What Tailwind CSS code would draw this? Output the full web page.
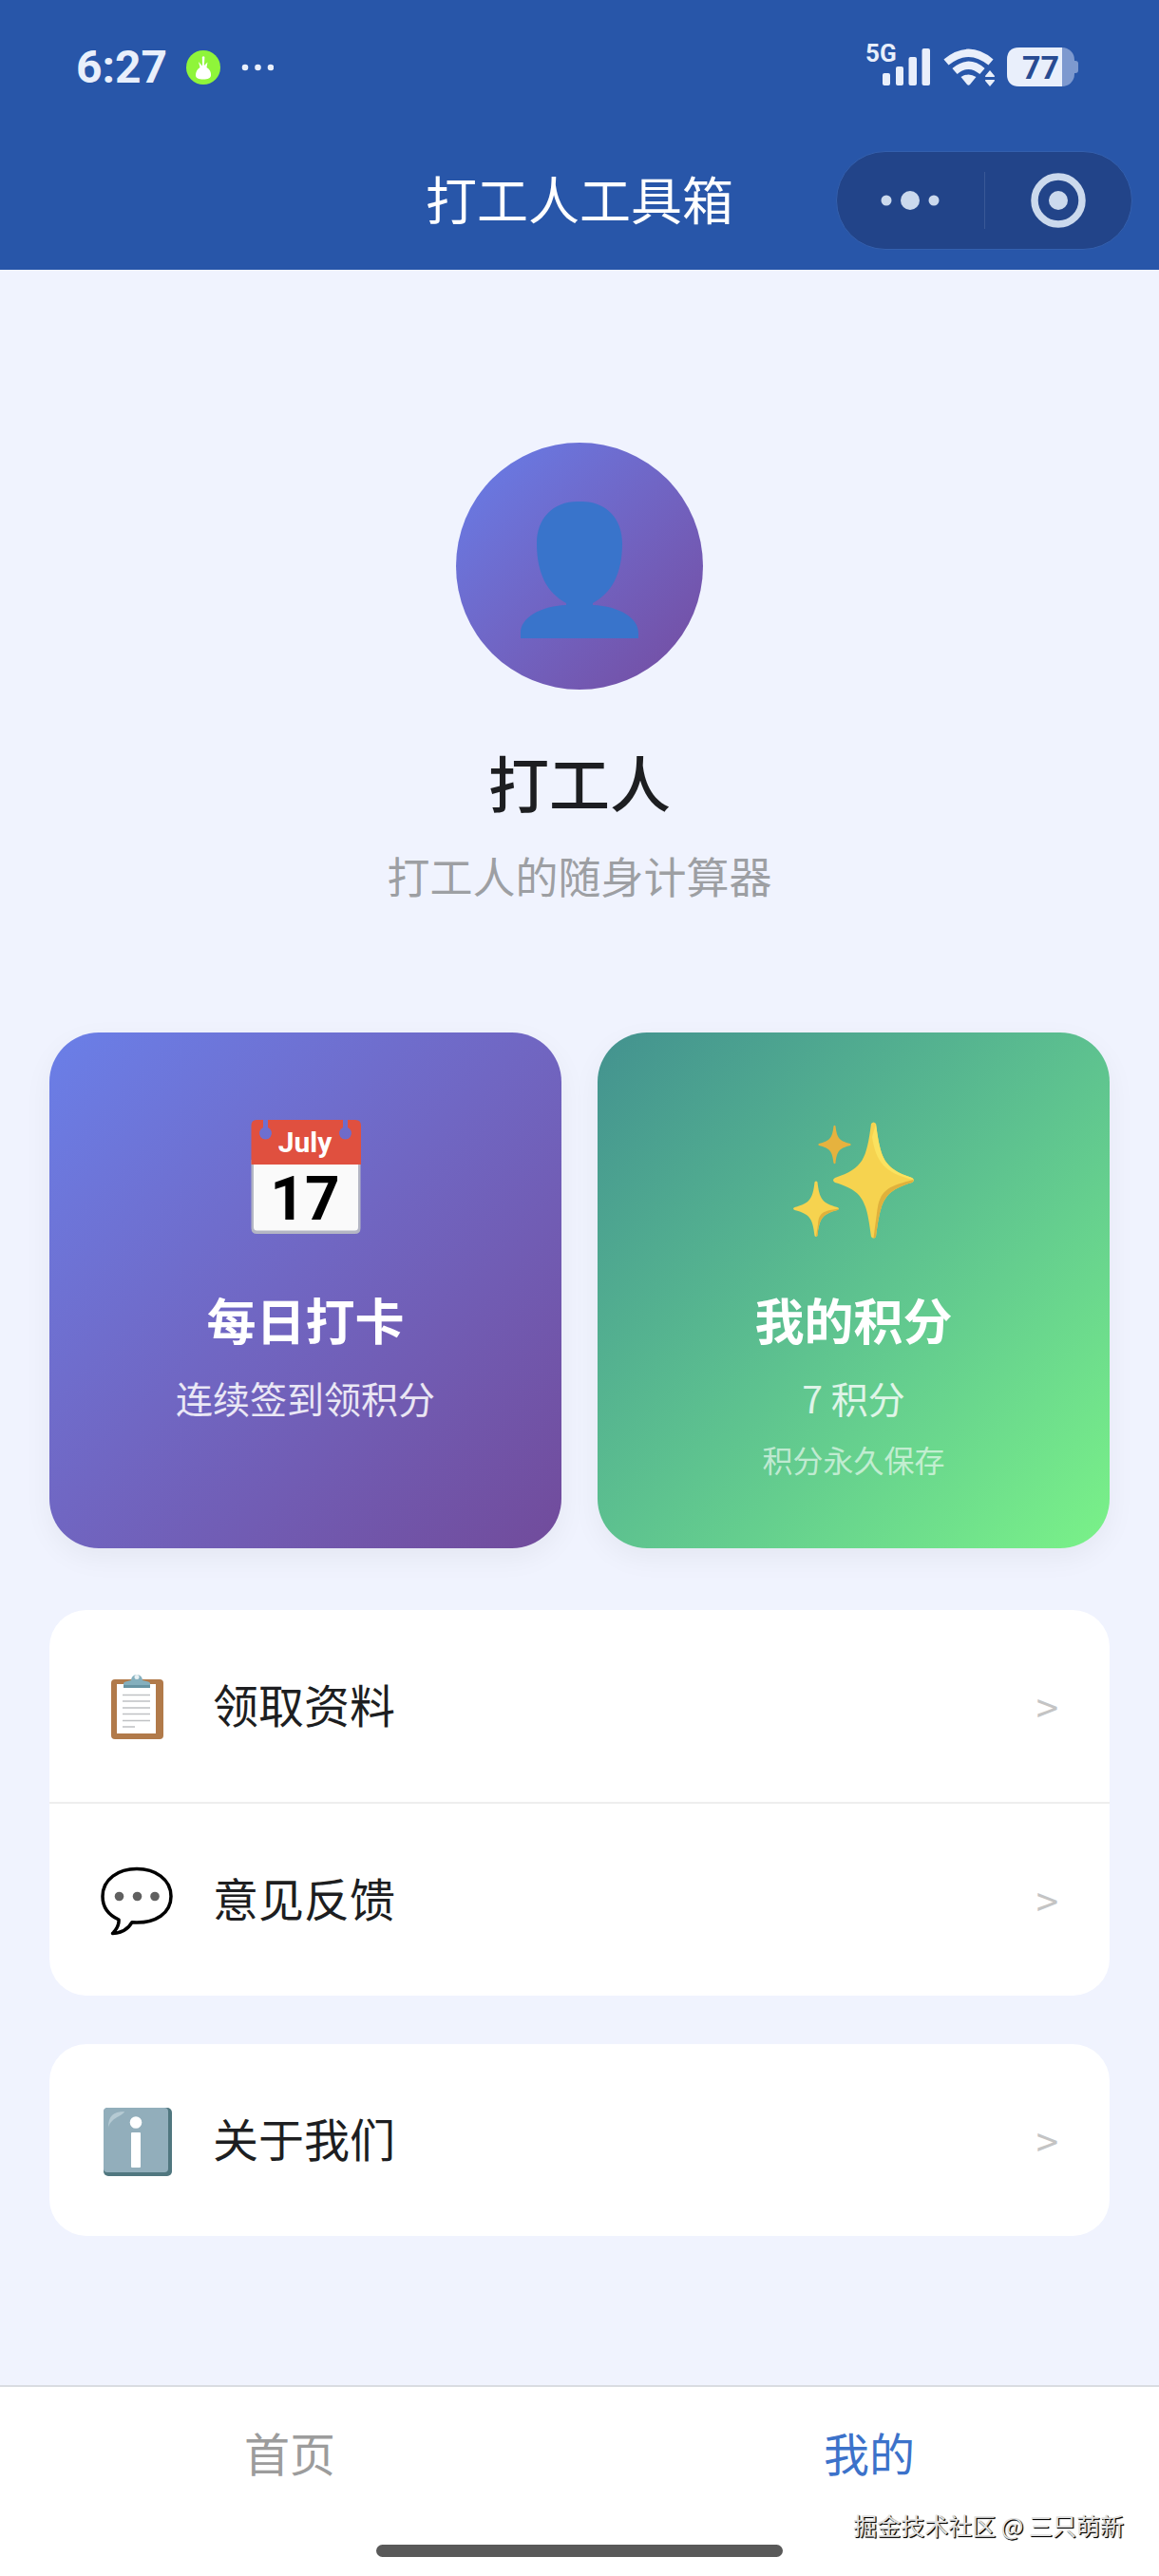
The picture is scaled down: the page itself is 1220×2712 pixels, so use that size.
<!DOCTYPE html>
<html lang="zh-CN">
<head>
<meta charset="utf-8">
<meta name="viewport" content="width=device-width, initial-scale=1">
<title>打工人工具箱</title>
<script src="https://cdn.jsdelivr.net/npm/@tailwindcss/browser@4"></script>
</head>
<body class="bg-[#f0f3fe] font-['Noto_Sans_CJK_SC',sans-serif] text-[#1d1e21]">
<div class="relative flex min-h-screen flex-col">

  <header class="bg-[#2856a9] text-white">
    <!-- status bar -->
    <div class="flex h-[142px] items-center justify-between pr-[84px] pl-20 text-[#e9effb]">
      <div class="flex items-center">
        <span class="font-['Roboto',sans-serif] text-[48px] leading-none font-bold">6:27</span>
        <svg class="ml-5 size-9" viewBox="0 0 36 36" aria-hidden="true">
          <circle cx="18" cy="18" r="18" fill="#8ff53a"/>
          <path d="M16.800 7c.8-.9 2-.9 2.600 0l-.5 9 3.600-3.500-1 5.500c3 1.500 5 5 4.500 8.500-.3 2.800-3 4-8 4s-7.800-1.300-8-4c-.2-3.500 1.700-6.800 4.500-8.500l-1.500-6 4 4.500z" fill="#fff"/>
        </svg>
        <svg class="ml-5 h-2 w-9" viewBox="0 0 36 8" fill="currentColor" aria-hidden="true">
          <circle cx="6" cy="4" r="3.300"/><circle cx="19.500" cy="4" r="3.300"/><circle cx="33" cy="4" r="3.300"/>
        </svg>
      </div>
      <svg class="h-14 w-[240px]" viewBox="896 43 240 56" fill="currentColor" aria-label="5G 77%">
        <text x="911" y="65" class="font-['Roboto',sans-serif] text-[26px] font-bold">5G</text>
        <rect x="929" y="77" width="8" height="13" rx="2"/>
        <rect x="943" y="70" width="8" height="20" rx="2"/>
        <rect x="956.500" y="60" width="8.500" height="30" rx="2"/>
        <rect x="970.500" y="51" width="8.500" height="39" rx="2"/>
        <path d="M996 65.500Q1019.500 46 1043 65.500" fill="none" stroke="currentColor" stroke-width="8"/>
        <path d="M1005 75Q1019.500 62.500 1034 75" fill="none" stroke="currentColor" stroke-width="8"/>
        <path d="M1011.500 81q8-5 16 0l-6.500 8q-1.500 1.500-3 0z"/>
        <path d="M1042 74l5 6q.5 1-1 1h-8q-1.500 0-1-1zM1042 91l5-6q.5-1-1-1h-8q-1.500 0-1 1z"/>
        <rect x="1060" y="50" width="71" height="41" rx="13" fill="#7d99cf"/>
        <path d="M1131 64h1q3 0 3 3v7q0 3-3 3h-1z" fill="#7d99cf"/>
        <path d="M1118 50v41h-45q-13 0-13-13V63q0-13 13-13z"/>
        <text x="1076" y="83" fill="#284b92" class="font-['Roboto',sans-serif] text-[34px] font-bold">77</text>
      </svg>
    </div>
    <!-- title bar -->
    <div class="grid h-[142px] grid-cols-[1fr_auto_1fr] items-center px-7 pb-1">
      <h1 class="col-start-2 pb-1 text-[54px] leading-[72px]">打工人工具箱</h1>
      <div class="flex h-[104px] w-[312px] items-center justify-self-end rounded-full border border-[#3460ae] bg-[#224489] text-[#cbd9ed]">
        <button type="button" aria-label="更多" class="flex h-full flex-1 items-center justify-center">
          <svg class="h-5 w-16" viewBox="0 0 64 20" fill="currentColor"><circle cx="7" cy="10" r="5.500"/><circle cx="32" cy="10" r="10"/><circle cx="57" cy="10" r="5.500"/></svg>
        </button>
        <span class="h-[60px] w-px bg-[#3a5897]"></span>
        <button type="button" aria-label="关闭" class="flex h-full flex-1 items-center justify-center">
          <svg class="size-[58px]" viewBox="0 0 58 58" fill="currentColor"><circle cx="29" cy="29" r="25" fill="none" stroke="currentColor" stroke-width="7.500"/><circle cx="29" cy="29" r="10"/></svg>
        </button>
      </div>
    </div>
  </header>

  <main class="px-[52px] pt-[182px] pb-16">
    <section class="flex flex-col items-center">
      <div class="flex size-[260px] items-center justify-center rounded-full bg-linear-135 from-[#667eea] to-[#744b9f] pt-2">
        <svg class="h-[146px] w-[124px]" viewBox="0 0 124 146" fill="#3974cb" aria-hidden="true">
          <path d="M62 1C89 0 107 18 107 45c0 32-11 52-31 63v2c28 1 48 14 48 29v6H0v-6c0-15 20-28 48-29v-2C28 97 17 77 17 45 17 18 35 0 62 1z"/>
        </svg>
      </div>
      <h2 class="mt-14 text-[64px] leading-[80px] font-medium">打工人</h2>
      <p class="mt-8 text-[45px] leading-[56px] text-[#9d9fa3]">打工人的随身计算器</p>
    </section>

    <section class="mt-[137px] grid grid-cols-2 gap-[38px] text-center text-white">
      <a href="#checkin" class="flex flex-col items-center rounded-[52px] bg-linear-135 from-[#6a7fe8] to-[#714b9b] pt-[90px] pb-[74px] shadow-[0_10px_30px_rgba(0,0,0,0.05)]">
        <svg class="size-32" viewBox="0 0 128 128" aria-hidden="true">
          <path d="M6.500 44h115v72q0 6-6 6h-103q-6 0-6-6z" fill="#b4b6c4"/>
          <path d="M9 44h110v71q0 3.500-3.500 3.500h-103q-3.500 0-3.500-3.500z" fill="#fafafa"/>
          <path d="M12 2h7v8a6.500 6.500 0 1 0 5 0V2h79v8a6.500 6.500 0 1 0 5 0V2h8q6 0 6 6v41H6.500V8q0-6 5.500-6z" fill="#e0503f"/>
          <text x="63" y="36" text-anchor="middle" fill="#fff" class="font-['Roboto',sans-serif] text-[30px] font-bold">July</text>
          <text x="63" y="107" text-anchor="middle" fill="#000" class="font-['Roboto',sans-serif] text-[64px] font-bold">17</text>
        </svg>
        <span class="mt-[54px] text-[52px] leading-[60px] font-bold">每日打卡</span>
        <span class="mt-7 text-[39px] leading-[48px] text-white/85">连续签到领积分</span>
      </a>
      <a href="#points" class="flex flex-col items-center rounded-[52px] bg-linear-135 from-[#43928f] to-[#7af288] pt-[90px] pb-[74px] shadow-[0_10px_30px_rgba(0,0,0,0.05)]">
        <svg class="size-32" viewBox="0 0 128 128" aria-hidden="true">
          <path d="M82 6q2.500-3 5 0c5 37 8 47 38 57q4 2.500 0 5c-30 9-33 19-38 57q-2.500 3-5 0c-5-38-8-48-38-57q-4-2.500 0-5c30-10 33-20 38-57z" fill="#f6d34f"/>
          <path d="M87 6c5 37 8 47 38 57q1.500 1 1.500 2C96 58 87 46 83 20z" fill="#fbe25f"/>
          <path d="M126.500 65q0 2-1.500 3c-30 9-33 19-38 57q-1 1.500-2.500 1.500L88 100c3-25 12-28 38.500-35z" fill="#e0b13c"/>
          <path d="M22.500 67.500q1.500-2 3 0c2 18 5 22 21 26.500q3 1.500 0 3c-16 4-19 9-21 27q-1.500 2-3 0c-2-18-5-23-21-27q-3-1.500 0-3c16-4.500 19-8.500 21-26.500z" fill="#f6d34f"/>
          <path d="M47.500 95.500c0 1-1 1.500-1 1.500-16 4-19 9-21 27l-1.500 1 2-13c1-13 6-14 21.500-16.500z" fill="#e0b13c"/>
          <path d="M42.500 8.500q1-1.500 2 0c1.500 13 4 15.500 15.500 18.500q1.500 1 0 2c-11.500 3-14 5.500-15.500 18.500q-1 1.500-2 0C41 34.500 38.500 32 27 29q-1.500-1 0-2c11.500-3 14-5.500 15.500-18.500z" fill="#e6b23e"/>
        </svg>
        <span class="mt-[54px] text-[52px] leading-[60px] font-bold">我的积分</span>
        <span class="mt-7 text-[39px] leading-[48px] text-white/80">7 积分</span>
        <span class="mt-[21px] text-[32px] leading-[40px] text-white/60">积分永久保存</span>
      </a>
    </section>

    <nav class="mt-[65px] flex flex-col gap-[51px] text-[48px] leading-[64px]">
      <ul class="overflow-hidden rounded-[39px] bg-white">
        <li class="border-b-2 border-[#eeeeee]">
          <a href="#materials" class="flex h-[202px] items-center gap-10 pr-[54px] pl-[52px]">
            <svg class="size-20" viewBox="0 0 80 80" aria-hidden="true">
              <rect x="13" y="12" width="55" height="63" rx="4" fill="#b17a4a"/>
              <rect x="19" y="17" width="41" height="52" fill="#fff"/>
              <path d="M25 28.500h29M25 35h29M25 42h29M25 48.500h29M25 55.500h29M25 62h13" stroke="#bfc1c4" stroke-width="1.500"/>
              <path d="M34 13a6 6 0 1 1 12 0l6 1.500q2 .5 2 2V21H26v-4.500q0-1.500 2-2z" fill="#84afbd"/>
              <path d="M26 18h28v3H26z" fill="#6794a3"/>
              <circle cx="40" cy="9.500" r="2.500" fill="#e8f1f4"/>
            </svg>
            <span class="flex-1 pb-1.5">领取资料</span>
            <span class="text-[42px] text-[#c4c4c4]">&gt;</span>
          </a>
        </li>
        <li>
          <a href="#feedback" class="flex h-[202px] items-center gap-10 pr-[54px] pl-[52px]">
            <svg class="size-20" viewBox="0 0 80 80" aria-hidden="true">
              <path d="M40 7.500C59 7.500 76 18 76 36.500S59 64 40 64l-5-.3C31 71 24 75 14.500 75.500c5-5 7-9 6.500-14.500C10 56 4 48 4 36.500 4 18 21 7.500 40 7.500z" fill="#fff" stroke="#000" stroke-width="3.500" stroke-linejoin="round"/>
              <circle cx="21.500" cy="36.500" r="4.800" fill="#606060"/><circle cx="40.500" cy="36.500" r="4.800" fill="#606060"/><circle cx="59" cy="36.500" r="4.800" fill="#606060"/>
            </svg>
            <span class="flex-1 pb-1.5">意见反馈</span>
            <span class="text-[42px] text-[#c4c4c4]">&gt;</span>
          </a>
        </li>
      </ul>
      <ul class="overflow-hidden rounded-[39px] bg-white">
        <li>
          <a href="#about" class="flex h-[202px] items-center gap-10 pr-[54px] pl-[52px]">
            <svg class="size-20" viewBox="0 0 80 80" aria-hidden="true">
              <rect x="5" y="6" width="72" height="72" rx="5" fill="#50777f"/>
              <rect x="5" y="6" width="68" height="68" rx="4" fill="#92aebb"/>
              <path d="M10 27c0-12 5-17 17-17-2 5-14 6-17 17z" fill="#b5cad3"/>
              <circle cx="39" cy="21.500" r="6.300" fill="#fff"/>
              <rect x="34" y="32" width="10" height="37" rx="1" fill="#fff"/>
            </svg>
            <span class="flex-1 pb-1.5">关于我们</span>
            <span class="text-[42px] text-[#c4c4c4]">&gt;</span>
          </a>
        </li>
      </ul>
    </nav>
  </main>

  <footer class="mt-auto border-t-2 border-[#d9dce1] bg-white">
    <nav class="grid grid-cols-2 pt-9 text-center text-[48px] leading-[64px]">
      <a href="#home" class="text-[#9c9c9c]">首页</a>
      <a href="#me" class="text-[#3c72ca]">我的</a>
    </nav>
    <div class="mx-auto mt-[66px] mb-5 h-[13px] w-[428px] rounded-full bg-[#595959]"></div>
  </footer>

  <p class="absolute right-[37px] bottom-9 text-[25px] leading-9 text-[#e2e2e2] [text-shadow:1px_1px_1px_#000,1px_1px_0_#222]">掘金技术社区 @ 三只萌新</p>
</div>
</body>
</html>
